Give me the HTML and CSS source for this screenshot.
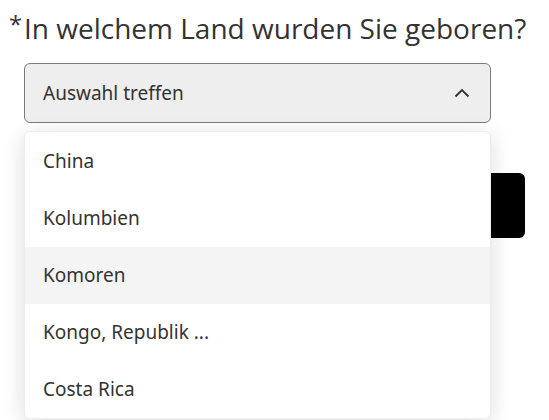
FILE: index.html
```html
<!DOCTYPE html>
<html lang="de">
<head>
    <meta charset="UTF-8">
    <meta name="viewport" content="width=device-width, initial-scale=1.0">
    <title>Geburtsland</title>
    <link rel="stylesheet" href="styles.css">
</head>
<body>
    <div class="question">
        <h1 class="question-title"><span class="required">*</span>In welchem Land wurden Sie geboren?</h1>
        <div class="select-wrap">
            <div class="select-box">
                <span class="select-value">Auswahl treffen</span>
                <svg class="chevron" width="16" height="10" viewBox="0 0 16 10">
                    <path d="M1.5 8.5 L8 2 L14.5 8.5" fill="none" stroke="#333" stroke-width="1.8"/>
                </svg>
            </div>
            <ul class="options">
                <li>China</li>
                <li>Kolumbien</li>
                <li class="hover">Komoren</li>
                <li>Kongo, Republik ...</li>
                <li>Costa Rica</li>
            </ul>
        </div>
        <div class="actions">
            <button class="next-btn">Weiter</button>
        </div>
    </div>
</body>
</html>
```

FILE: styles.css
```css
html, body {
    height: 100%;
}
body {
    margin: 0;
    padding: 0;
    background: #fff;
    font-family: "Noto Sans", "Open Sans", sans-serif;
    color: #333;
    overflow: hidden;
}
.question {
    min-height: 420px;
    padding: 8px 24px 0 24px;
    box-sizing: border-box;
}
.question-title {
    position: relative;
    margin: 0;
    font-family: "Open Sans", "Noto Sans", sans-serif;
    font-weight: 400;
    font-size: 28px;
    line-height: 40px;
    color: #333;
    white-space: nowrap;
}
.required {
    position: absolute;
    left: -15px;
    top: -4px;
    font-size: 24px;
}
.select-wrap {
    position: relative;
    width: 467px;
    margin-top: 15px;
}
.select-box {
    display: flex;
    align-items: center;
    justify-content: space-between;
    height: 60px;
    padding: 0 20px 0 18px;
    box-sizing: border-box;
    background: #eeeeee;
    border: 1.5px solid #7a7a7a;
    border-radius: 6px;
    font-size: 19px;
}
.chevron {
    display: block;
}
.options {
    position: absolute;
    top: 68px;
    left: 0;
    right: 0;
    margin: 0;
    padding: 1px 0 0 0;
    list-style: none;
    background: #fff;
    border: 1px solid #eeeeee;
    border-radius: 6px;
    box-shadow: 0 4px 22px rgba(0, 0, 0, 0.14);
    z-index: 2;
}
.options li {
    height: 57px;
    line-height: 57px;
    padding-left: 18px;
    font-size: 19px;
}
.options li.hover {
    background: #f4f4f4;
}
.actions {
    display: flex;
    justify-content: flex-end;
    margin-top: 50px;
}
.next-btn {
    width: 130px;
    height: 65px;
    background: #000;
    color: #fff;
    border: none;
    border-radius: 6px;
    font-size: 18px;
}
```
